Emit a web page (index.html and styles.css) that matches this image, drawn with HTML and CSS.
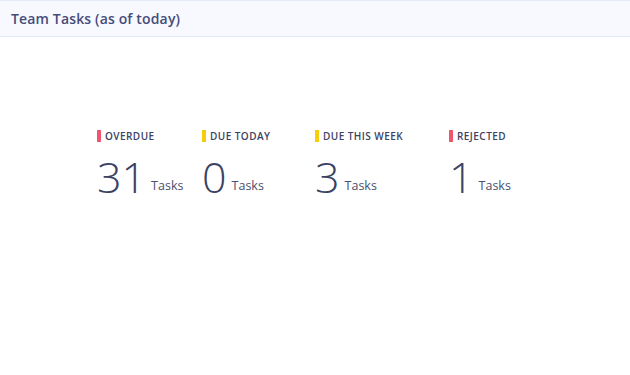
FILE: index.html
```html
<!DOCTYPE html>
<html lang="en">
<head>
    <meta charset="UTF-8">
    <title>Team Tasks</title>
    <link rel="stylesheet" href="styles.css">
</head>
<body>
    <div class="panel">
        <div class="panel-header">Team Tasks (as of today)</div>

        <div class="stats">
            <div class="stat stat-overdue">
                <div class="stat-label"><span class="bar red"></span>OVERDUE</div>
                <div class="stat-value"><span class="num">31</span><span class="unit">Tasks</span></div>
            </div>
            <div class="stat stat-today">
                <div class="stat-label"><span class="bar yellow"></span>DUE TODAY</div>
                <div class="stat-value"><span class="num">0</span><span class="unit">Tasks</span></div>
            </div>
            <div class="stat stat-week">
                <div class="stat-label"><span class="bar yellow"></span>DUE THIS WEEK</div>
                <div class="stat-value"><span class="num">3</span><span class="unit">Tasks</span></div>
            </div>
            <div class="stat stat-rejected">
                <div class="stat-label"><span class="bar red"></span>REJECTED</div>
                <div class="stat-value"><span class="num">1</span><span class="unit">Tasks</span></div>
            </div>
        </div>
    </div>
</body>
</html>
```

FILE: styles.css
```css
* {
    padding: 0;
    margin: 0;
    box-sizing: border-box;
}

body {
    font-family: 'Open Sans', sans-serif;
    background-color: #ffffff;
    color: #3b4263;
    width: 630px;
    height: 375px;
    overflow: hidden;
}

.panel-header {
    height: 37px;
    padding: 0 11px;
    display: flex;
    align-items: center;
    background-color: #f7f9fe;
    border-top: 1px solid #e6ebf8;
    border-bottom: 1px solid #e3e9f7;
    font-size: 14px;
    font-weight: 600;
    letter-spacing: 0.15px;
    color: #464b7a;
}

.stats {
    display: flex;
    padding: 92px 0 0 97px;
}

.stat-overdue { width: 105px; }
.stat-today { width: 113px; }
.stat-week { width: 134px; }

.stat-label {
    display: flex;
    align-items: center;
    height: 14px;
    font-size: 10px;
    font-weight: 600;
    color: #3b4263;
    letter-spacing: 0.45px;
}

.bar {
    display: inline-block;
    width: 4px;
    height: 12px;
    margin-right: 4px;
}

.bar.red {
    background-color: #f0566e;
}

.bar.yellow {
    background-color: #f7cd08;
}

.stat-value {
    margin-top: 9px;
    line-height: 50px;
    white-space: nowrap;
}

.num {
    font-size: 43px;
    font-weight: 300;
    color: #3b4263;
    margin-right: 5px;
}

.unit {
    font-size: 12.5px;
    color: #4a5070;
    vertical-align: 3px;
}
```
